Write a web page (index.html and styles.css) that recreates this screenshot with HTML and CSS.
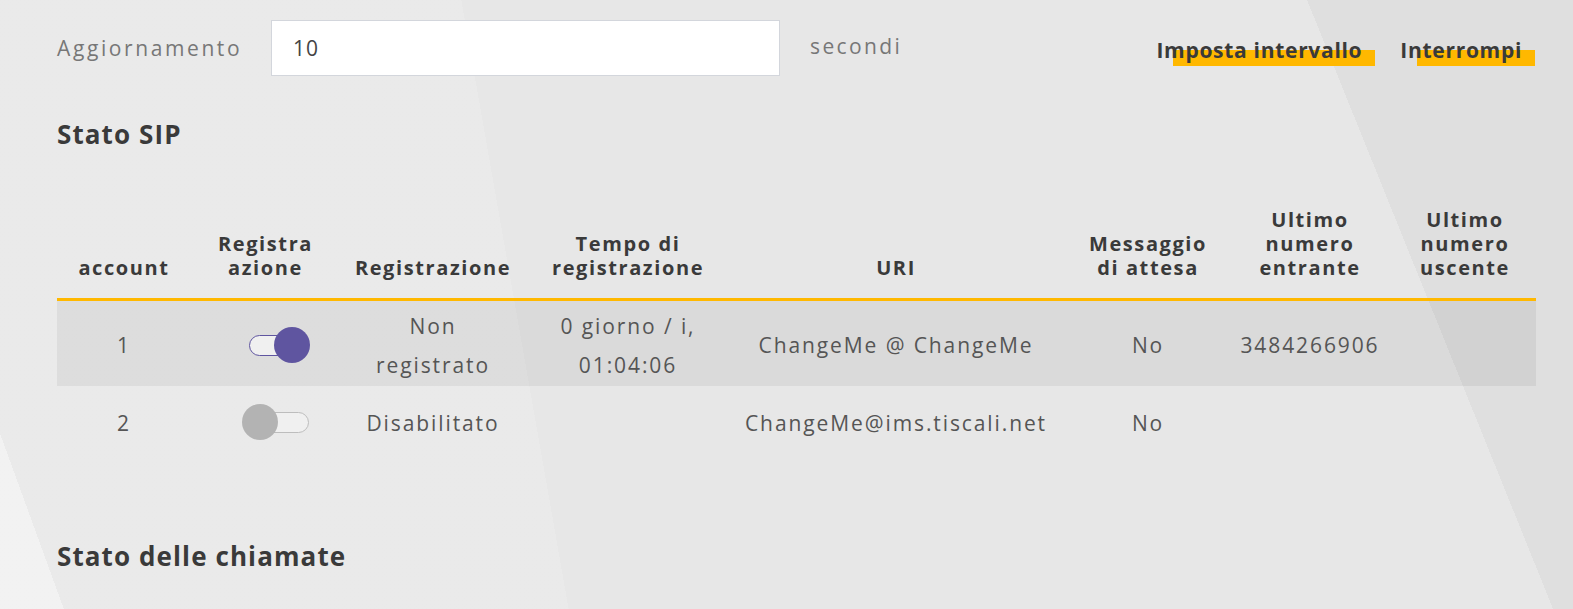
FILE: index.html
```html
<!DOCTYPE html>
<html lang="it">

<head>
    <meta charset="UTF-8">
    <meta name="viewport" content="width=device-width, initial-scale=1.0">
    <title>Stato VoIP</title>
    <link rel="stylesheet" href="styles.css">
</head>

<body>
    <div class="page">
        <div class="refresh">
            <span class="refresh-label">Aggiornamento</span>
            <input class="refresh-input" type="text" value="10">
            <span class="refresh-unit">secondi</span>
            <div class="refresh-actions">
                <a href="javascript:;" class="link-btn">Imposta intervallo</a>
                <a href="javascript:;" class="link-btn">Interrompi</a>
            </div>
        </div>

        <h2 class="section-title">Stato SIP</h2>

        <table class="sip-table">
            <colgroup>
                <col class="c-account">
                <col class="c-switch">
                <col class="c-reg">
                <col class="c-time">
                <col class="c-uri">
                <col class="c-msg">
                <col class="c-in">
                <col class="c-out">
            </colgroup>
            <thead>
                <tr>
                    <th>account</th>
                    <th>Registra<br>azione</th>
                    <th>Registrazione</th>
                    <th>Tempo di<br>registrazione</th>
                    <th>URI</th>
                    <th>Messaggio<br>di attesa</th>
                    <th>Ultimo<br>numero<br>entrante</th>
                    <th class="last">Ultimo<br>numero<br>uscente</th>
                </tr>
            </thead>
            <tbody>
                <tr class="row-odd">
                    <td>1</td>
                    <td><span class="switch on"></span></td>
                    <td>Non<br>registrato</td>
                    <td>0 giorno / i,<br>01:04:06</td>
                    <td>ChangeMe @ ChangeMe</td>
                    <td>No</td>
                    <td>3484266906</td>
                    <td></td>
                </tr>
                <tr class="row-even">
                    <td>2</td>
                    <td><span class="switch"></span></td>
                    <td>Disabilitato</td>
                    <td></td>
                    <td>ChangeMe@ims.tiscali.net</td>
                    <td>No</td>
                    <td></td>
                    <td></td>
                </tr>
            </tbody>
        </table>

        <h2 class="section-title calls">Stato delle chiamate</h2>
    </div>
</body>

</html>
```

FILE: styles.css
```css
* {
    margin: 0;
    padding: 0;
    box-sizing: border-box;
}

html,
body {
    height: 100%;
}

body {
    font-family: "Open Sans", "Liberation Sans", sans-serif;
    color: #555;
    background-color: #e7e7e7;
    /* 背景斜纹 */
    background-image:
        linear-gradient(68deg, transparent 1440px, rgba(0, 0, 0, 0.035) 1440px),
        linear-gradient(70deg, rgba(255, 255, 255, 0.4) 0, rgba(255, 255, 255, 0.4) 60px, transparent 60px),
        linear-gradient(80deg, rgba(255, 255, 255, 0.12) 0, rgba(255, 255, 255, 0.12) 560px, transparent 560px);
    overflow: hidden;
}

.page {
    padding: 20px 37px 0 57px;
}

/* 顶部刷新栏 */
.refresh {
    display: flex;
    align-items: center;
    height: 56px;
}

.refresh-label {
    width: 214px;
    font-size: 21px;
    letter-spacing: 2.6px;
    color: #777;
}

.refresh-input {
    width: 509px;
    height: 56px;
    border: 1px solid #d3d6dc;
    background: #fff;
    padding-left: 21px;
    font-family: inherit;
    font-size: 21px;
    letter-spacing: 1px;
    color: #444;
    outline: none;
}

.refresh-unit {
    margin-left: 30px;
    margin-top: -4px;
    font-size: 21px;
    letter-spacing: 2.4px;
    color: #777;
}

.refresh-actions {
    margin-left: auto;
    margin-right: 14px;
    display: flex;
    gap: 38px;
    margin-top: 4px;
}

.link-btn {
    position: relative;
    z-index: 0;
    font-size: 21px;
    font-weight: 700;
    letter-spacing: 0.7px;
    color: #3a3a3a;
    text-decoration: none;
}

/* 黄色下划线色块 */
.link-btn::after {
    content: "";
    position: absolute;
    left: 17px;
    right: -13px;
    top: 50%;
    height: 16px;
    background-color: #ffb800;
    z-index: -1;
}

.section-title {
    margin-top: 42px;
    font-size: 26px;
    line-height: 32px;
    font-weight: 700;
    letter-spacing: 1.1px;
    color: #3a3a3a;
}

.section-title.calls {
    margin-top: 84px;
}

/* SIP 表格 */
.sip-table {
    margin-top: 50px;
    width: 1479px;
    border-collapse: collapse;
    table-layout: fixed;
}

.c-account { width: 134px; }
.c-switch { width: 149px; }
.c-reg { width: 186px; }
.c-time { width: 204px; }
.c-uri { width: 332px; }
.c-msg { width: 172px; }
.c-in { width: 152px; }
.c-out { width: 150px; }

.sip-table th {
    vertical-align: bottom;
    padding: 8px 0 18px;
    border-bottom: 3px solid #ffb800;
    font-size: 20px;
    line-height: 24px;
    font-weight: 700;
    letter-spacing: 1.6px;
    color: #3a3a3a;
    text-align: center;
}

.sip-table th.last {
    padding-left: 8px;
}

.sip-table td {
    padding-top: 5px;
    text-align: center;
    vertical-align: middle;
    font-size: 21px;
    line-height: 39px;
    letter-spacing: 1.9px;
    color: #555;
}

.row-odd {
    height: 86px;
    background-color: rgba(0, 0, 0, 0.055);
}

.row-even {
    height: 70px;
}

/* 开关 */
.switch {
    position: relative;
    display: inline-block;
    vertical-align: middle;
    width: 60px;
    height: 21px;
    margin-left: 27px;
    margin-top: -5px;
    border: 1.5px solid #bdbdbd;
    border-radius: 11px;
    background-color: #f0f0f0;
}

.switch::after {
    content: "";
    position: absolute;
    left: -8px;
    top: -9px;
    width: 36px;
    height: 36px;
    border-radius: 50%;
    background-color: #b3b3b3;
}

.switch.on {
    border-color: #5f55a0;
}

.switch.on::after {
    left: auto;
    right: -1.5px;
    background-color: #5f55a0;
}
```
